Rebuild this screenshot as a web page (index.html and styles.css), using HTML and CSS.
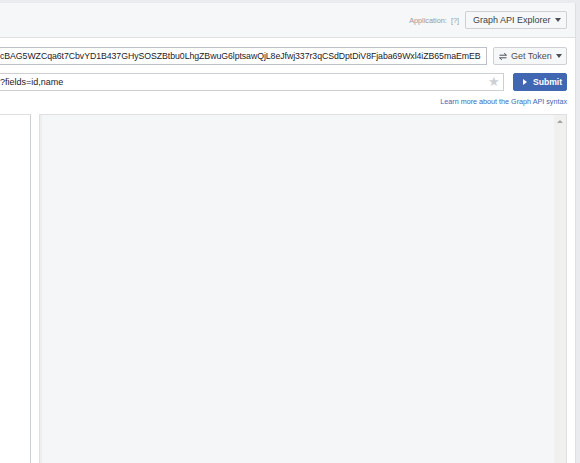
FILE: index.html
```html
<!DOCTYPE html>
<html>
<head>
<meta charset="utf-8">
<link rel="stylesheet" href="styles.css">
</head>
<body>
<div class="main">
  <div class="header">
    <span class="app-label">Application:</span>
    <span class="app-help">[?]</span>
    <div class="btn app-btn">Graph API Explorer <span class="caret"></span></div>
  </div>
  <div class="content">
    <div class="row token-row">
      <div class="field token-field">cBAG5WZCqa6t7CbvYD1B437GHySOSZBtbu0LhgZBwuG6lptsawQjL8eJfwj337r3qCSdDptDiV8Fjaba69Wxl4iZB65maEmEB</div>
      <div class="btn token-btn">
        <svg class="swap" width="8" height="7" viewBox="0 0 8 7"><path d="M0.5 2.2H7.5M5.2 0.3L7.5 2.2" stroke="#4b4f56" stroke-width="1" fill="none"/><path d="M7.5 4.8H0.5M2.8 6.7L0.5 4.8" stroke="#4b4f56" stroke-width="1" fill="none"/></svg>
        Get Token <span class="caret"></span>
      </div>
    </div>
    <div class="row url-row">
      <div class="field url-field"><span class="url-text">?fields=id,name</span><span class="star">★</span></div>
      <div class="btn submit-btn"><span class="play"></span>Submit</div>
    </div>
    <div class="learn-row"><span class="learn">Learn more about the Graph API syntax</span></div>
    <div class="panels">
      <div class="left-panel"></div>
      <div class="right-panel">
        <div class="scrollbar"><span class="up"></span></div>
      </div>
    </div>
  </div>
</div>
</body>
</html>
```
FILE: styles.css
```css
html, body {
  margin: 0;
  padding: 0;
  height: 100%;
  overflow: hidden;
}
body {
  background: #e9ebee;
  font-family: "Liberation Sans", Arial, sans-serif;
  color: #1d2129;
}
.main {
  width: 575px;
  margin-top: 3px;
  background: #fff;
  border-right: 1px solid #dddfe2;
  height: 470px;
}
.header {
  background: #f6f7f9;
  border-bottom: 1px solid #dddfe2;
  display: flex;
  align-items: center;
  justify-content: flex-end;
  padding-right: 8px;
  box-sizing: border-box;
  height: 35px;
}
.app-label {
  font-size: 7.3px;
  color: #9a9a9a;
}
.app-help {
  font-size: 7.3px;
  color: #9a9a9a;
  margin-left: 4px;
  margin-right: 6px;
}
.btn {
  display: flex;
  align-items: center;
  box-sizing: border-box;
  height: 18px;
  border: 1px solid #ced0d4;
  background: #f6f7f9;
  color: #4b4f56;
  font-size: 9px;
  border-radius: 2px;
  white-space: nowrap;
}
.app-btn {
  width: 102px;
  padding-left: 7px;
  margin-top: -1px;
  color: #3b3f46;
}
.caret {
  display: inline-block;
  width: 0;
  height: 0;
  border-left: 3.5px solid transparent;
  border-right: 3.5px solid transparent;
  border-top: 4px solid #4b4f56;
  margin-left: 4px;
}
.content {
  padding-right: 8px;
}
.row {
  display: flex;
  align-items: center;
}
.token-row {
  margin-top: 9px;
  height: 18px;
}
.field {
  flex: 1;
  min-width: 0;
  box-sizing: border-box;
  height: 18px;
  border: 1px solid #bdc1c9;
  border-left: none;
  font-size: 9px;
  line-height: 16px;
  color: #1d2129;
  white-space: nowrap;
  overflow: hidden;
  padding-left: 0;
}
.token-field {
  margin-right: 6px;
  font-size: 8.75px;
  letter-spacing: -0.06px;
}
.token-btn {
  width: 74px;
  padding-left: 5px;
}
.swap {
  margin-right: 4px;
}
.url-row {
  margin-top: 8px;
  height: 18px;
}
.url-field {
  display: flex;
  align-items: center;
  justify-content: space-between;
  margin-right: 9px;
  border-color: #ccd0d5;
}
.star {
  color: #ccd0d5;
  font-size: 13px;
  margin-right: 3px;
  line-height: 16px;
}
.submit-btn {
  width: 54px;
  background: #4267b2;
  border-color: #4267b2;
  color: #fff;
  font-weight: bold;
  padding-left: 9px;
  font-size: 8.6px;
}
.play {
  display: inline-block;
  width: 0;
  height: 0;
  border-top: 3px solid transparent;
  border-bottom: 3px solid transparent;
  border-left: 4px solid #fff;
  margin-right: 6px;
}
.learn-row {
  display: flex;
  justify-content: flex-end;
  margin-top: 5px;
  height: 11px;
  align-items: center;
}
.learn {
  font-size: 7.2px;
  color: #4267b2;
}
.panels {
  display: flex;
  margin-top: 7px;
  height: 360px;
  gap: 8px;
}
.left-panel {
  width: 30px;
  border-top: 1px solid #dddfe2;
  border-right: 1px solid #ccd0d5;
}
.right-panel {
  flex: 1;
  border: 1px solid #dddfe2;
  background: #f5f6f8;
  box-shadow: inset 2px 0 0 #eceef0;
  display: flex;
  justify-content: flex-end;
}
.scrollbar {
  width: 12px;
  background: #f0f0ee;
  display: flex;
  justify-content: center;
  padding-top: 5px;
  box-sizing: border-box;
}
.up {
  width: 0;
  height: 0;
  border-left: 3px solid transparent;
  border-right: 3px solid transparent;
  border-bottom: 3px solid #a3a3a3;
}
```
